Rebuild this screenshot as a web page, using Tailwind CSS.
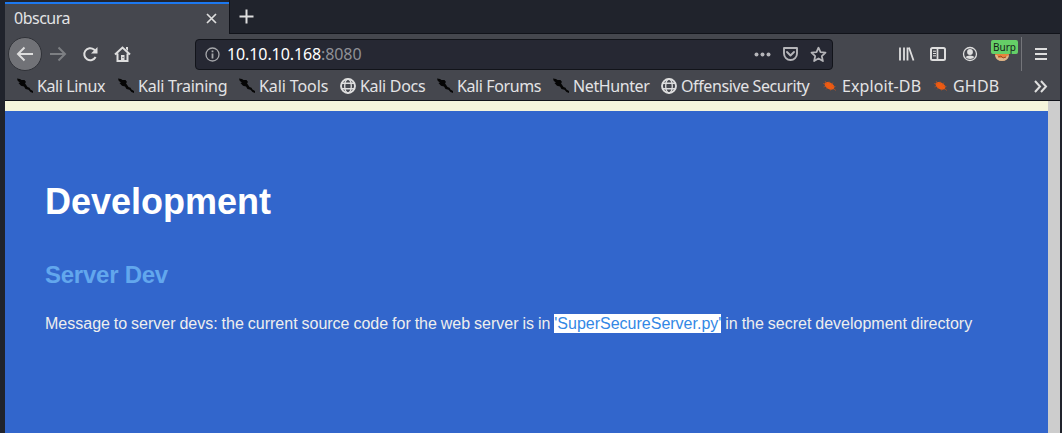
<!DOCTYPE html>
<html lang="en">
<head>
<meta charset="utf-8">
<title>0bscura</title>
<script src="https://cdn.jsdelivr.net/npm/@tailwindcss/browser@4"></script>
</head>
<body class="h-[433px] w-[1062px] overflow-hidden bg-[#20232c] font-['Noto_Sans',sans-serif] text-[#e3e3e5]">
<svg width="0" height="0" class="absolute">
  <symbol id="kali" viewBox="0 0 16 16"><path d="M0 .5l3 .5 1.500 1 3 0 1.500 2-1 1.200L10.500 9l2 .8 1 1.700 2.500 1.500v2l-2.500-1-2-2.200-3-.8-1.500-2.500L4 7.700 1.500 5 3 4.500 .8 3z" fill="#050505"/></symbol>
  <symbol id="globe" viewBox="0 0 16 16"><g fill="none" stroke="#dedede"><circle cx="8" cy="8" r="7" stroke-width="1.900"/><ellipse cx="8" cy="8" rx="3.300" ry="7" stroke-width="1.300"/><path d="M1.500 5.300h13M1.500 10.700h13" stroke-width="1.400"/></g></symbol>
  <symbol id="bug" viewBox="0 0 16 16"><ellipse cx="7.500" cy="7.800" rx="5.300" ry="3.300" transform="rotate(28 7.500 7.800)" fill="#ee5b12"/><path d="M1 5.500l3 .5M3 3l2 3M7 3.500l.5 2M1.500 9l3-1M4 11.500l2-2M11 4.500l-2 3M13.500 8.500l-3 0M8.500 12.500l1-2M14 12.500l-3-2" stroke="#c9551f" stroke-width=".6"/></symbol>
</svg>
<div class="ml-[5px] flex h-[433px] w-[1055px] flex-col">
  <div class="flex h-[34px] shrink-0 items-end">
    <div class="flex h-8 w-[224px] items-center justify-between border-t-2 border-[#1c78f0] bg-[#45474e] pb-0.5 pl-[9px] pr-[11px]">
      <span class="text-[16px] leading-6 tracking-[-0.5px]">0bscura</span>
      <svg width="13" height="13" viewBox="0 0 13 13"><path d="M2 2l9 9M11 2l-9 9" stroke="#dedede" stroke-width="1.700"/></svg>
    </div>
    <div class="flex h-[34px] flex-1 items-center border-b border-l border-[#11131a] pl-[9px]">
      <svg width="15" height="15" viewBox="0 0 15 15"><path d="M7.500 .5v14M.5 7.500h14" stroke="#dedede" stroke-width="2"/></svg>
    </div>
  </div>
  <div class="flex h-10 shrink-0 items-center bg-[#45474e]">
    <div class="ml-[3px] grid size-[34px] place-items-center rounded-full border border-[#303238] bg-[#717277]">
      <svg width="18" height="16" viewBox="0 0 18 16"><path d="M17 8H2M8.500 1.500L2 8l6.500 6.500" fill="none" stroke="#dedede" stroke-width="2"/></svg>
    </div>
    <svg class="ml-[7px]" width="18" height="16" viewBox="0 0 18 16"><path d="M1 8h15M9.500 1.500L16 8l-6.500 6.500" fill="none" stroke="#7d7f83" stroke-width="2"/></svg>
    <svg class="ml-[15px]" width="17" height="16" viewBox="0 0 17 16"><path d="M13.600 11A6 6 0 1 1 12 3.500L14 5.500" fill="none" stroke="#dedede" stroke-width="2"/><path d="M15.500 1v6.500H9z" fill="#dedede"/></svg>
    <svg class="ml-[15px]" width="17" height="17" viewBox="0 0 17 17"><path d="M1 8.500L8.500 1.500 16 8.500M3.500 7.500V15h10V7.500" fill="none" stroke="#dedede" stroke-width="2"/><path d="M12 1h2v4l-2-2zM7 9h3.500v6H7z" fill="#dedede"/><path d="M9 11v1" stroke="#45474e"/></svg>
    <div class="ml-[64px] flex h-[31px] w-[638px] items-center rounded-[4px] border border-[#12141a] bg-[#262833] pl-[9px] pr-[5px]">
      <svg width="15" height="15" viewBox="0 0 15 15"><circle cx="7.500" cy="7.500" r="6.500" fill="none" stroke="#a6a7ab" stroke-width="1.300"/><path d="M7.500 6.500v5M7.500 3.500v1.700" stroke="#a6a7ab" stroke-width="1.800"/></svg>
      <span class="ml-[7px] pb-px text-[16px] leading-6 tracking-[-0.1px] text-white">10.10.10.168<span class="text-[#8f9096]">:8080</span></span>
      <svg class="ml-auto" width="17" height="5" viewBox="0 0 17 5"><g fill="#b5b5b9"><circle cx="2.500" cy="2.500" r="2"/><circle cx="8.500" cy="2.500" r="2"/><circle cx="14.500" cy="2.500" r="2"/></g></svg>
      <svg class="ml-[11px]" width="17" height="16" viewBox="0 0 17 16"><path d="M2 2h13v5.500a6.500 6.500 0 0 1-13 0zM5 6l3.500 3.500L12 6" fill="none" stroke="#b5b5b9" stroke-width="1.900" stroke-linejoin="round" stroke-linecap="round"/></svg>
      <svg class="ml-[11px]" width="17" height="17" viewBox="0 0 17 17"><path d="M8.500 1.700l2 4.500 5 .5-3.700 3.400 1.100 5-4.400-2.600-4.400 2.600 1.100-5L1.500 6.700l5-.5z" fill="none" stroke="#b5b5b9" stroke-width="1.800" stroke-linejoin="round"/></svg>
    </div>
    <svg class="ml-[65px]" width="17" height="16" viewBox="0 0 17 16"><path d="M2 1.500v13M6 1.500v13M9.500 1.500v13M11 1.500l4.500 13" stroke="#dedede" stroke-width="1.800"/></svg>
    <svg class="ml-[15px]" width="16" height="16" viewBox="0 0 16 16"><rect x="1" y="2" width="14" height="12" rx="1.500" fill="none" stroke="#dedede" stroke-width="2"/><path d="M7.500 2v12" stroke="#dedede" stroke-width="1.700"/><path d="M3 5.200h3M3 7.500h3M3 9.800h3" stroke="#dedede" stroke-width="1"/></svg>
    <svg class="ml-[16px]" width="16" height="16" viewBox="0 0 16 16"><circle cx="8" cy="8" r="6.500" fill="none" stroke="#dedede" stroke-width="1.300"/><circle cx="8" cy="6" r="2.900" fill="#dedede"/><path d="M3.500 11Q5 9.500 8 9.500t4.500 1.500Q11 13 8 13t-4.500-2z" fill="#dedede"/></svg>
    <div class="relative ml-[16px] size-4">
      <svg width="16" height="16" viewBox="0 0 16 16"><circle cx="8" cy="8" r="7" fill="#e7833c"/><path d="M1 9q1 6 7 6t7-6l-2 1-2 2H5l-2-3z" fill="#dab58a"/><path d="M4 11l3-1 2 2 3-1" stroke="#9c4d2a" fill="none"/></svg>
      <div class="absolute -left-[3px] -top-[6px] flex h-[14px] w-[27px] items-center justify-center rounded-[2px] bg-[#65cf67] text-[10px] leading-none text-[#172219]">Burp</div>
    </div>
    <div class="ml-[11px] h-[34px] w-px bg-[#74757a]"></div>
    <svg class="ml-[13px]" width="12" height="14" viewBox="0 0 12 14"><path d="M0 2h12M0 7h12M0 12h12" stroke="#dedede" stroke-width="2"/></svg>
  </div>
  <div class="flex h-[27px] shrink-0 items-center gap-3 whitespace-nowrap border-b border-[#11131a] bg-[#45474e] pb-0.5 pl-3 text-[16px] leading-[24px]">
    <div class="flex w-[89px] items-center gap-1"><svg class="size-4 shrink-0"><use href="#kali"/></svg><span class="tracking-[-0.4px]">Kali Linux</span></div>
    <div class="flex w-[109px] items-center gap-1"><svg class="size-4 shrink-0"><use href="#kali"/></svg><span class="tracking-[-0.25px]">Kali Training</span></div>
    <div class="flex w-[89px] items-center gap-1"><svg class="size-4 shrink-0"><use href="#kali"/></svg><span class="tracking-[-0.1px]">Kali Tools</span></div>
    <div class="flex w-[85px] items-center gap-1"><svg class="size-4 shrink-0"><use href="#globe"/></svg><span class="tracking-[-0.3px]">Kali Docs</span></div>
    <div class="flex w-[104px] items-center gap-1"><svg class="size-4 shrink-0"><use href="#kali"/></svg><span class="tracking-[-0.4px]">Kali Forums</span></div>
    <div class="flex w-[96px] items-center gap-1"><svg class="size-4 shrink-0"><use href="#kali"/></svg><span class="tracking-[-0.4px]">NetHunter</span></div>
    <div class="flex w-[149px] items-center gap-1"><svg class="size-4 shrink-0"><use href="#globe"/></svg><span class="tracking-[-0.4px]">Offensive Security</span></div>
    <div class="flex w-[99px] items-center gap-1"><svg class="size-4 shrink-0"><use href="#bug"/></svg><span class="tracking-[0.1px]">Exploit-DB</span></div>
    <div class="flex w-[67px] items-center gap-1"><svg class="size-4 shrink-0"><use href="#bug"/></svg><span class="tracking-[0.2px]">GHDB</span></div>
    <svg class="ml-auto mr-[12px]" width="15" height="13" viewBox="0 0 15 13"><path d="M2 1l5 5.500L2 12M8 1l5 5.500L8 12" fill="none" stroke="#dedede" stroke-width="2"/></svg>
  </div>
  <div class="flex flex-1">
    <main class="w-[1043px] border-t-[10px] border-[#f5f5dc] bg-[#3266cc] pl-10 font-['Liberation_Sans',sans-serif]">
      <h1 class="mt-[70px] text-[36px] font-bold leading-[42px] text-white">Development</h1>
      <h2 class="mt-[38px] text-[24px] font-bold leading-[28px] tracking-[-0.25px] text-[#62a7ed]">Server Dev</h2>
      <p class="mt-[25px] whitespace-nowrap text-[16px] leading-[19px] text-[#eeeeee] [word-spacing:-0.53px]">Message to server devs: the current source code for the web server is in <span class="inline-block bg-white text-[#3388e5]">'SuperSecureServer.py'</span> in the secret development directory</p>
    </main>
    <div class="w-3 bg-[#cdcdcd]"></div>
  </div>
</div>
</body>
</html>
